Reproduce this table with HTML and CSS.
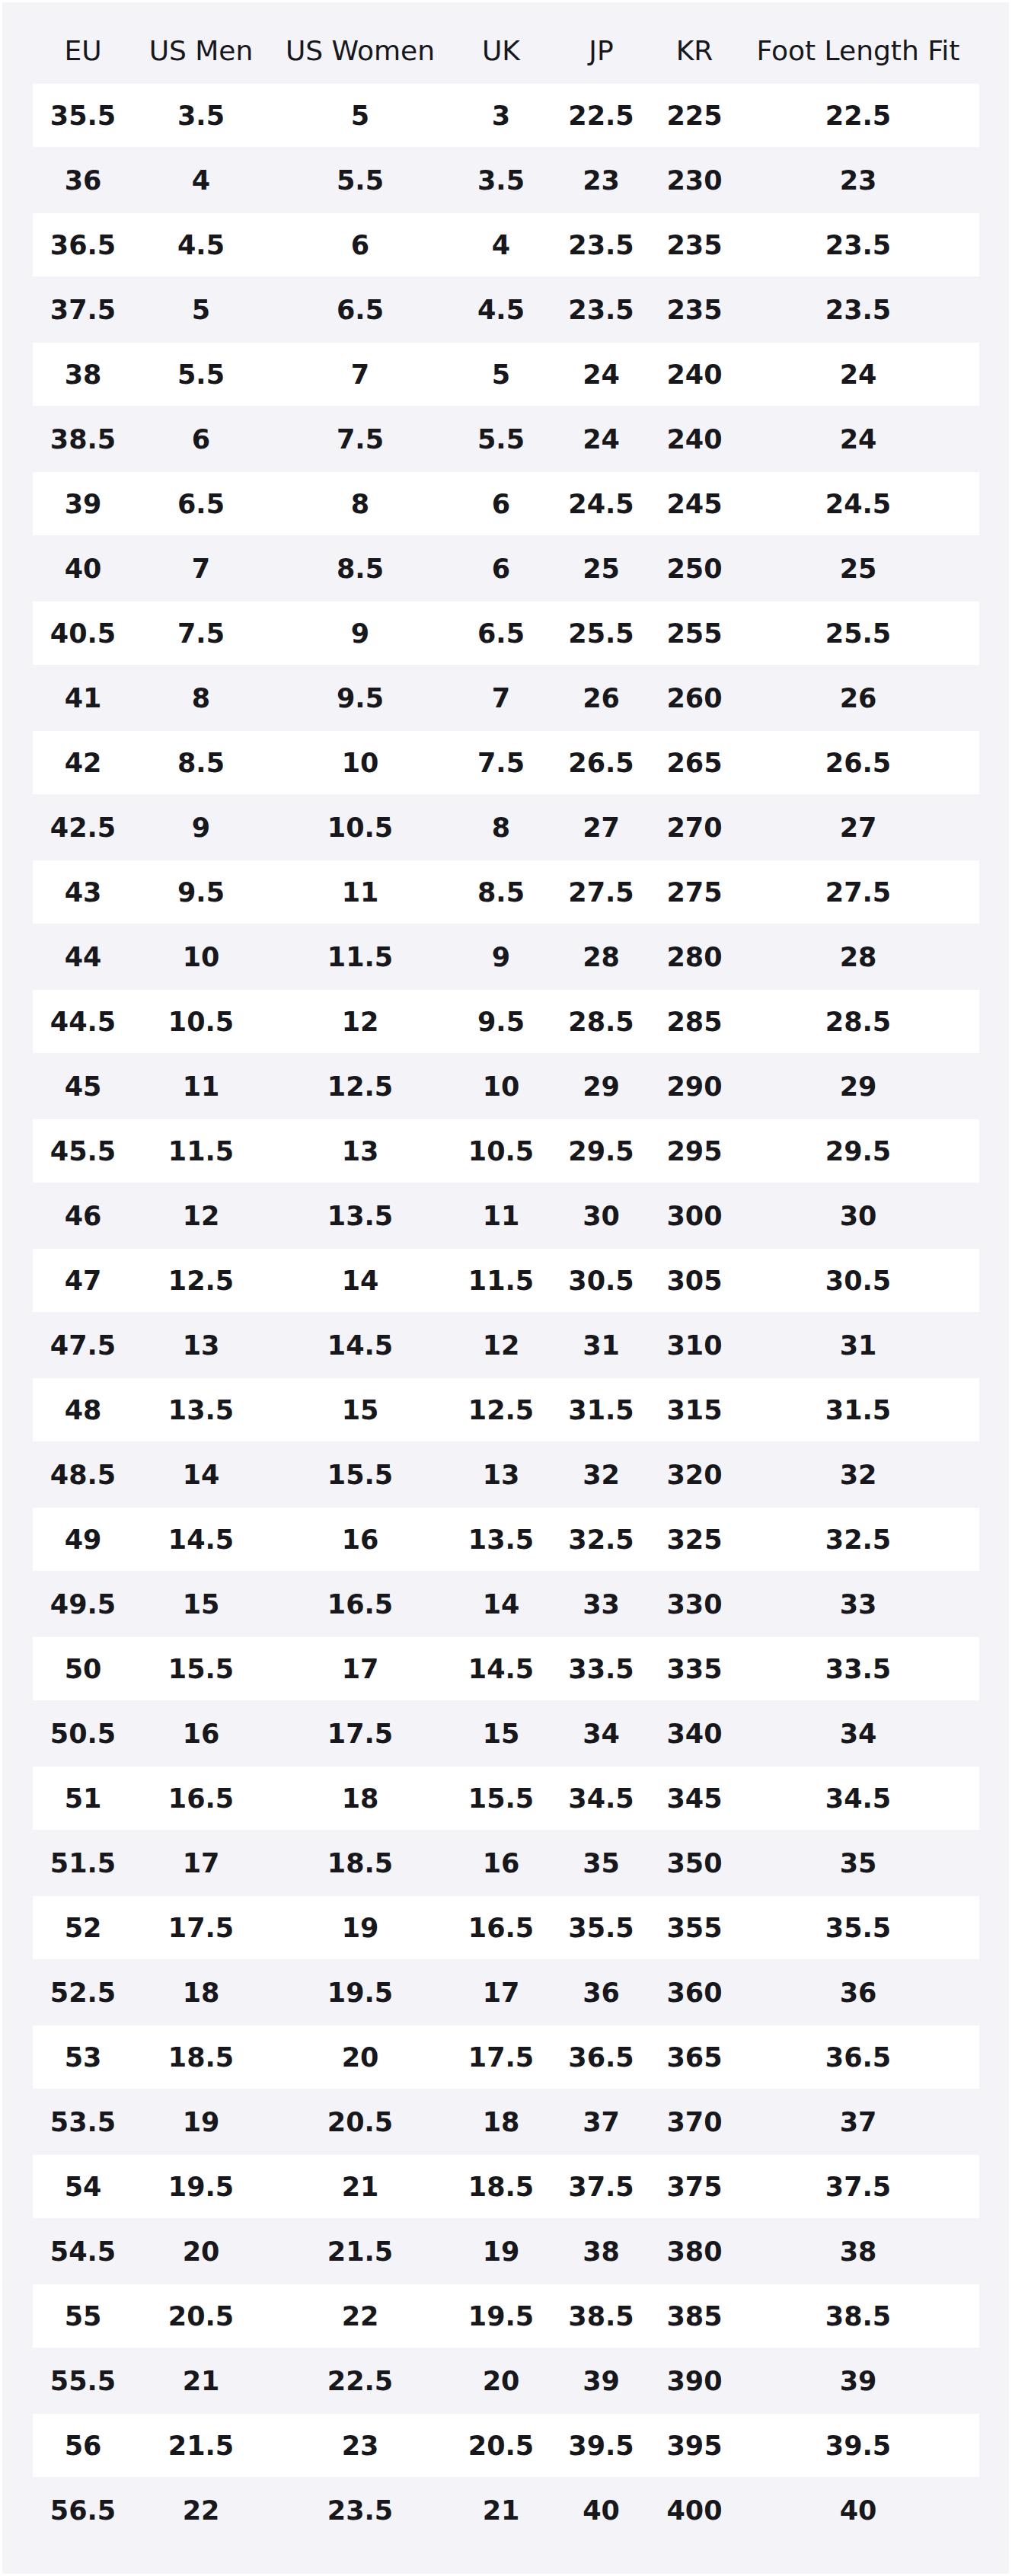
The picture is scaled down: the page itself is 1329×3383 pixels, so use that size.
FILE: index.html
```html
<!DOCTYPE html>
<html lang="en">
<head>
<meta charset="utf-8">
<title>Size Chart</title>
<link rel="stylesheet" href="styles.css">
</head>
<body>
<div class="chart">
<table class="size-table">
<colgroup>
<col class="c-eu"><col class="c-usm"><col class="c-usw"><col class="c-uk"><col class="c-jp"><col class="c-kr"><col class="c-fit">
</colgroup>
<thead>
<tr><th>EU</th><th>US Men</th><th>US Women</th><th>UK</th><th>JP</th><th>KR</th><th>Foot Length Fit</th></tr>
</thead>
<tbody>
<tr><td>35.5</td><td>3.5</td><td>5</td><td>3</td><td>22.5</td><td>225</td><td>22.5</td></tr>
<tr><td>36</td><td>4</td><td>5.5</td><td>3.5</td><td>23</td><td>230</td><td>23</td></tr>
<tr><td>36.5</td><td>4.5</td><td>6</td><td>4</td><td>23.5</td><td>235</td><td>23.5</td></tr>
<tr><td>37.5</td><td>5</td><td>6.5</td><td>4.5</td><td>23.5</td><td>235</td><td>23.5</td></tr>
<tr><td>38</td><td>5.5</td><td>7</td><td>5</td><td>24</td><td>240</td><td>24</td></tr>
<tr><td>38.5</td><td>6</td><td>7.5</td><td>5.5</td><td>24</td><td>240</td><td>24</td></tr>
<tr><td>39</td><td>6.5</td><td>8</td><td>6</td><td>24.5</td><td>245</td><td>24.5</td></tr>
<tr><td>40</td><td>7</td><td>8.5</td><td>6</td><td>25</td><td>250</td><td>25</td></tr>
<tr><td>40.5</td><td>7.5</td><td>9</td><td>6.5</td><td>25.5</td><td>255</td><td>25.5</td></tr>
<tr><td>41</td><td>8</td><td>9.5</td><td>7</td><td>26</td><td>260</td><td>26</td></tr>
<tr><td>42</td><td>8.5</td><td>10</td><td>7.5</td><td>26.5</td><td>265</td><td>26.5</td></tr>
<tr><td>42.5</td><td>9</td><td>10.5</td><td>8</td><td>27</td><td>270</td><td>27</td></tr>
<tr><td>43</td><td>9.5</td><td>11</td><td>8.5</td><td>27.5</td><td>275</td><td>27.5</td></tr>
<tr><td>44</td><td>10</td><td>11.5</td><td>9</td><td>28</td><td>280</td><td>28</td></tr>
<tr><td>44.5</td><td>10.5</td><td>12</td><td>9.5</td><td>28.5</td><td>285</td><td>28.5</td></tr>
<tr><td>45</td><td>11</td><td>12.5</td><td>10</td><td>29</td><td>290</td><td>29</td></tr>
<tr><td>45.5</td><td>11.5</td><td>13</td><td>10.5</td><td>29.5</td><td>295</td><td>29.5</td></tr>
<tr><td>46</td><td>12</td><td>13.5</td><td>11</td><td>30</td><td>300</td><td>30</td></tr>
<tr><td>47</td><td>12.5</td><td>14</td><td>11.5</td><td>30.5</td><td>305</td><td>30.5</td></tr>
<tr><td>47.5</td><td>13</td><td>14.5</td><td>12</td><td>31</td><td>310</td><td>31</td></tr>
<tr><td>48</td><td>13.5</td><td>15</td><td>12.5</td><td>31.5</td><td>315</td><td>31.5</td></tr>
<tr><td>48.5</td><td>14</td><td>15.5</td><td>13</td><td>32</td><td>320</td><td>32</td></tr>
<tr><td>49</td><td>14.5</td><td>16</td><td>13.5</td><td>32.5</td><td>325</td><td>32.5</td></tr>
<tr><td>49.5</td><td>15</td><td>16.5</td><td>14</td><td>33</td><td>330</td><td>33</td></tr>
<tr><td>50</td><td>15.5</td><td>17</td><td>14.5</td><td>33.5</td><td>335</td><td>33.5</td></tr>
<tr><td>50.5</td><td>16</td><td>17.5</td><td>15</td><td>34</td><td>340</td><td>34</td></tr>
<tr><td>51</td><td>16.5</td><td>18</td><td>15.5</td><td>34.5</td><td>345</td><td>34.5</td></tr>
<tr><td>51.5</td><td>17</td><td>18.5</td><td>16</td><td>35</td><td>350</td><td>35</td></tr>
<tr><td>52</td><td>17.5</td><td>19</td><td>16.5</td><td>35.5</td><td>355</td><td>35.5</td></tr>
<tr><td>52.5</td><td>18</td><td>19.5</td><td>17</td><td>36</td><td>360</td><td>36</td></tr>
<tr><td>53</td><td>18.5</td><td>20</td><td>17.5</td><td>36.5</td><td>365</td><td>36.5</td></tr>
<tr><td>53.5</td><td>19</td><td>20.5</td><td>18</td><td>37</td><td>370</td><td>37</td></tr>
<tr><td>54</td><td>19.5</td><td>21</td><td>18.5</td><td>37.5</td><td>375</td><td>37.5</td></tr>
<tr><td>54.5</td><td>20</td><td>21.5</td><td>19</td><td>38</td><td>380</td><td>38</td></tr>
<tr><td>55</td><td>20.5</td><td>22</td><td>19.5</td><td>38.5</td><td>385</td><td>38.5</td></tr>
<tr><td>55.5</td><td>21</td><td>22.5</td><td>20</td><td>39</td><td>390</td><td>39</td></tr>
<tr><td>56</td><td>21.5</td><td>23</td><td>20.5</td><td>39.5</td><td>395</td><td>39.5</td></tr>
<tr><td>56.5</td><td>22</td><td>23.5</td><td>21</td><td>40</td><td>400</td><td>40</td></tr>
</tbody>
</table>
</div>
</body>
</html>
```
FILE: styles.css
```css
html, body {
  margin: 0;
  padding: 0;
  background: #ffffff;
}

body {
  font-family: "DejaVu Sans", "Liberation Sans", sans-serif;
  color: #17171c;
}

.chart {
  margin: 3px 4px 3px 3px;
  padding: 20px 39px 40px 40px;
  background: #f4f4f8;
}

.size-table {
  width: 100%;
  table-layout: fixed;
  border-collapse: separate;
  border-spacing: 0 2px;
  font-size: 35px;
}

.c-eu { width: 132px; }
.c-usm { width: 178px; }
.c-usw { width: 240px; }
.c-uk { width: 130px; }
.c-jp { width: 133px; }
.c-kr { width: 112px; }
.c-fit { width: 318px; }

.size-table th,
.size-table td {
  height: 83px;
  padding: 0;
  text-align: center;
  vertical-align: middle;
  white-space: nowrap;
}

.size-table th {
  font-size: 36px;
  font-weight: normal;
}

.size-table td {
  font-weight: bold;
}

.size-table tbody tr:nth-child(odd) td {
  background: #ffffff;
}
```
